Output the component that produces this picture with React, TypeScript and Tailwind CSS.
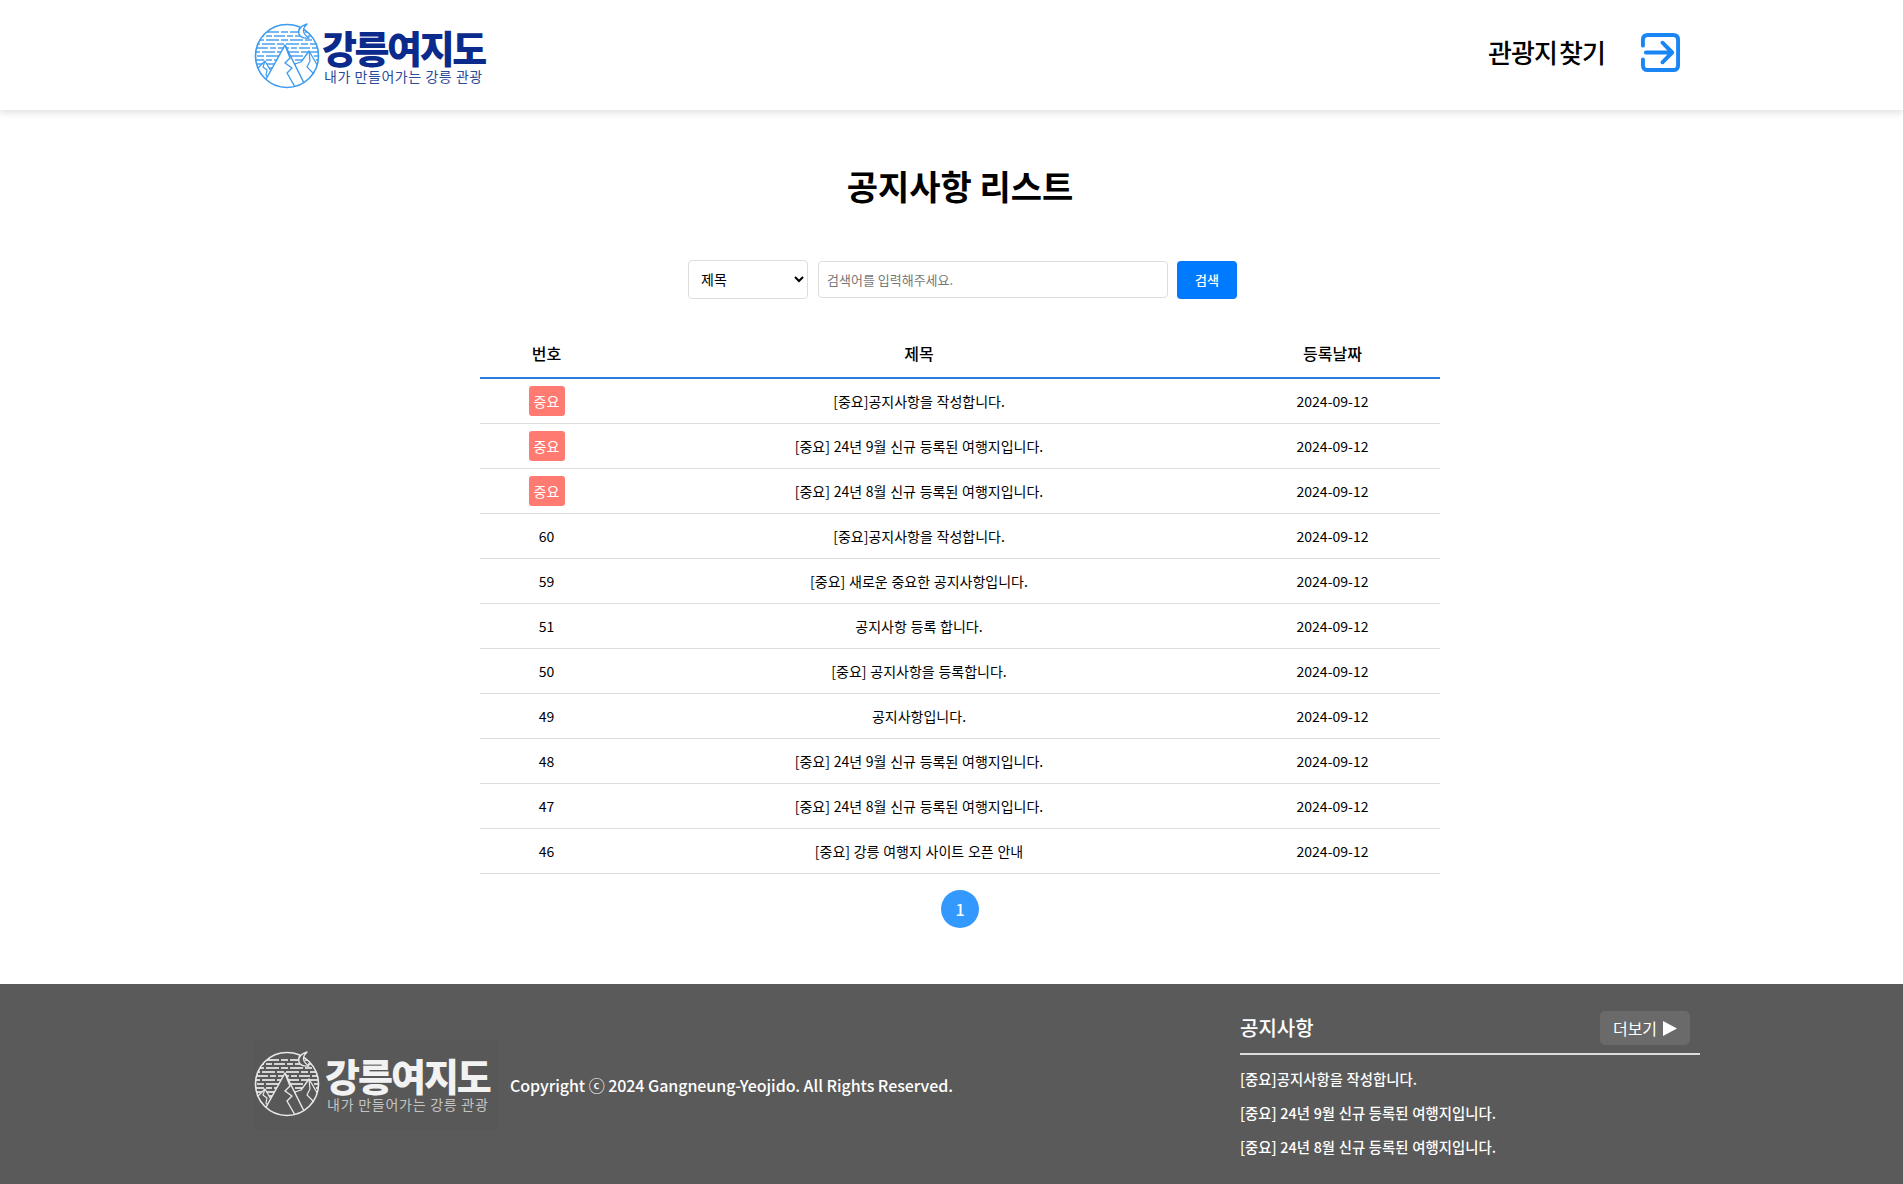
import React from 'react';

const FONT = { fontFamily: '"Noto Sans CJK KR", "Noto Sans", sans-serif' };

const notices = [
  { no: '중요', title: '[중요]공지사항을 작성합니다.' },
  { no: '중요', title: '[중요] 24년 9월 신규 등록된 여행지입니다.' },
  { no: '중요', title: '[중요] 24년 8월 신규 등록된 여행지입니다.' },
  { no: '60', title: '[중요]공지사항을 작성합니다.' },
  { no: '59', title: '[중요] 새로운 중요한 공지사항입니다.' },
  { no: '51', title: '공지사항 등록 합니다.' },
  { no: '50', title: '[중요] 공지사항을 등록합니다.' },
  { no: '49', title: '공지사항입니다.' },
  { no: '48', title: '[중요] 24년 9월 신규 등록된 여행지입니다.' },
  { no: '47', title: '[중요] 24년 8월 신규 등록된 여행지입니다.' },
  { no: '46', title: '[중요] 강릉 여행지 사이트 오픈 안내' },
];

const footerNotices = [
  '[중요]공지사항을 작성합니다.',
  '[중요] 24년 9월 신규 등록된 여행지입니다.',
  '[중요] 24년 8월 신규 등록된 여행지입니다.',
];

// wall of the emblem, one row of bricks every 4px
const brickRows = [12, 16, 20, 24, 28, 32, 36, 40, 44, 48, 52];

const Emblem: React.FC<{ id: string; line: string; brick: string; fill: string }> = ({ id, line, brick, fill }) => (
  <svg width="70" height="70" viewBox="0 0 70 70" className="shrink-0">
    <defs>
      <clipPath id={id}>
        <circle cx="34" cy="36" r="31.5" />
      </clipPath>
    </defs>
    <g clipPath={`url(#${id})`}>
      {brickRows.map((y, i) => (
        <line key={y} x1={i % 2 ? 0 : 4} y1={y} x2="70" y2={y} stroke={brick} strokeWidth="1.9" strokeDasharray={i % 3 === 1 ? '11 2 6 2' : '7 2 13 2'} />
      ))}
      {/* left peak */}
      <path d="M12 41 L3 50 L8 70 H22 L19 53 Z" fill={fill} stroke={line} strokeWidth="1.3" strokeLinejoin="round" />
      <path d="M12 41 L10 47 L14 50 L13 55 L17 60" fill="none" stroke={line} strokeWidth="1.2" />
      {/* right peak */}
      <path d="M56 31 L66 48 L60 70 H46 L42 44 L48 42 L51 38 Z" fill={fill} stroke={line} strokeWidth="1.3" strokeLinejoin="round" />
      <path d="M56 31 L57 41 L54 47 L60 53 L57 60" fill="none" stroke={line} strokeWidth="1.2" />
      {/* main peak */}
      <path d="M32 25 L12 61 L34 72 L52 65 Z" fill={fill} stroke={line} strokeWidth="1.5" strokeLinejoin="round" />
      <path d="M32 25 L37 38 L32 43 L39 48 L34 53 L42 67" fill="none" stroke={line} strokeWidth="1.4" strokeLinejoin="round" />
    </g>
    <circle cx="34" cy="36" r="31.5" fill="none" stroke={line} strokeWidth="1.6" />
    {/* crescent sits over the rim */}
    <path d="M54 4 Q44 7 46 14 Q48 19 56 18 Q51 15 50.5 11 Q50.5 7 54 4 Z" fill={fill} stroke={line} strokeWidth="1.4" strokeLinejoin="round" />
  </svg>
);

const Logo: React.FC<{ footer?: boolean }> = ({ footer }) => (
  <div className="flex items-center">
    {footer ? <Emblem id="emblem-footer" line="#e8e8e8" brick="#d4d4d4" fill="#585858" /> : <Emblem id="emblem-header" line="#3d9bf0" brick="#79b9f3" fill="#ffffff" />}
    <div className={`flex flex-col items-start ${footer ? 'ml-[2px]' : '-ml-[1px]'}`}>
      <span className={`mt-[3px] text-[38px] leading-[38px] font-black ${footer ? 'tracking-[-2px] text-[#f2f2f2]' : 'tracking-[-2.4px] text-[#0a2a8c]'}`}>강릉여지도</span>
      <span className={`mt-[1px] ml-[2px] text-[14px] leading-[18px] ${footer ? 'tracking-[0.75px] text-[#c4c4c4]' : 'tracking-[0.55px] text-[#2a4a9c]'}`}>내가 만들어가는 강릉 관광</span>
    </div>
  </div>
);

export default function App() {
  return (
    <div className="h-[1184px] bg-white text-black overflow-hidden flex flex-col" style={FONT}>
      {/* header */}
      <header className="h-[110px] shrink-0 pl-[253px] pr-[222px] flex items-center justify-between bg-white shadow-[0_2px_8px_rgba(0,0,0,0.15)]">
        <Logo />
        <div className="flex items-center gap-[35px] pb-[5px]">
          <span className="-mt-[2px] text-[26px] font-medium tracking-[-0.9px] [word-spacing:-3px]">관광지 찾기</span>
          <svg width="41" height="41" viewBox="0 0 42 42" fill="none" stroke="#1a86f5" strokeWidth="4" strokeLinecap="round" strokeLinejoin="round">
            <path d="M3 14 V8 Q3 3 8 3 H34 Q39 3 39 8 V34 Q39 39 34 39 H8 Q3 39 3 34 V28" />
            <path d="M6 21 H32 M23 11 L33 21 L23 31" />
          </svg>
        </div>
      </header>

      {/* notice list */}
      <main className="flex-1 w-[960px] ml-[480px] flex flex-col items-center">
        <h1 className="mt-[50px] text-[34px] leading-[52px] font-bold">공지사항 리스트</h1>
        <form className="mt-[48px] flex items-center gap-[10px] ml-[5px]">
          <select className="w-[120px] h-[39px] pl-[8px] pr-[4px] pb-[2px] border border-[#ddd] rounded-[4px] bg-white text-[14px] outline-none">
            <option>제목</option>
          </select>
          <input placeholder="검색어를 입력해주세요." className="w-[350px] h-[37px] px-[8px] border border-[#ddd] rounded-[4px] text-[13px] placeholder:text-[#777] outline-none" />
          <button type="button" className="-ml-[1px] w-[60px] h-[38px] rounded-[4px] bg-[#007bff] text-white text-[13px] font-medium">검색</button>
        </form>
        <table className="mt-[31px] w-[960px] table-fixed border-collapse text-[14px] text-center [word-spacing:0.6px]">
          <thead>
            <tr className="h-[48px] border-b-2 border-[#2b7de0] text-[16px]">
              <th className="w-[133px] font-medium pb-[2px]">번호</th>
              <th className="font-medium pb-[2px]">제목</th>
              <th className="w-[215px] font-medium pb-[2px]">등록날짜</th>
            </tr>
          </thead>
          <tbody>
            {notices.map((n, i) => (
              <tr key={i} className="h-[45px] border-b border-[#ddd]">
                <td className="pt-[1px]">
                  {n.no === '중요' ? (
                    <span className="inline-block w-[36px] h-[30px] leading-[30px] rounded-[3px] bg-[#ff7b72] text-white align-middle">중요</span>
                  ) : n.no}
                </td>
                <td className="pt-[1px]">{n.title}</td>
                <td className="pt-[1px]">2024-09-12</td>
              </tr>
            ))}
          </tbody>
        </table>
        <div className="mt-[16px] w-[38px] h-[38px] rounded-full bg-[#3399ff] text-white font-medium text-[16px] flex items-center justify-center">1</div>
      </main>

      {/* footer */}
      <footer className="h-[200px] shrink-0 bg-[#5a5a5a] text-white pl-[253px] pr-[203px] flex justify-between">
        <div className="flex items-center gap-[12px]">
          <div className="bg-[#585858] w-[245px] h-[90px] pb-[5px] flex items-center mt-[2px]">
            <Logo footer />
          </div>
          <p className="text-[16px] font-medium tracking-[-0.05px] mt-[2px]">Copyright ⓒ 2024 Gangneung-Yeojido. All Rights Reserved.</p>
        </div>
        <div className="w-[460px] pt-[27px]">
          <div className="h-[34px] pb-[8px] border-b-2 border-[#ddd] flex items-center justify-between pr-[10px] box-content">
            <h2 className="text-[20px] font-medium">공지사항</h2>
            <button type="button" className="w-[90px] h-[34px] rounded-[5px] bg-[#6a6a6a] text-[16px] flex items-center justify-center gap-[6px]">
              더보기
              <svg width="14" height="15" viewBox="0 0 14 15"><path d="M0 0 L14 7.5 L0 15 Z" fill="#fff" /></svg>
            </button>
          </div>
          <ul className="mt-[7px]">
            {footerNotices.map((t) => (
              <li key={t} className="h-[34px] leading-[34px] text-[14.4px] font-medium [word-spacing:0.4px]">{t}</li>
            ))}
          </ul>
        </div>
      </footer>
    </div>
  );
}
